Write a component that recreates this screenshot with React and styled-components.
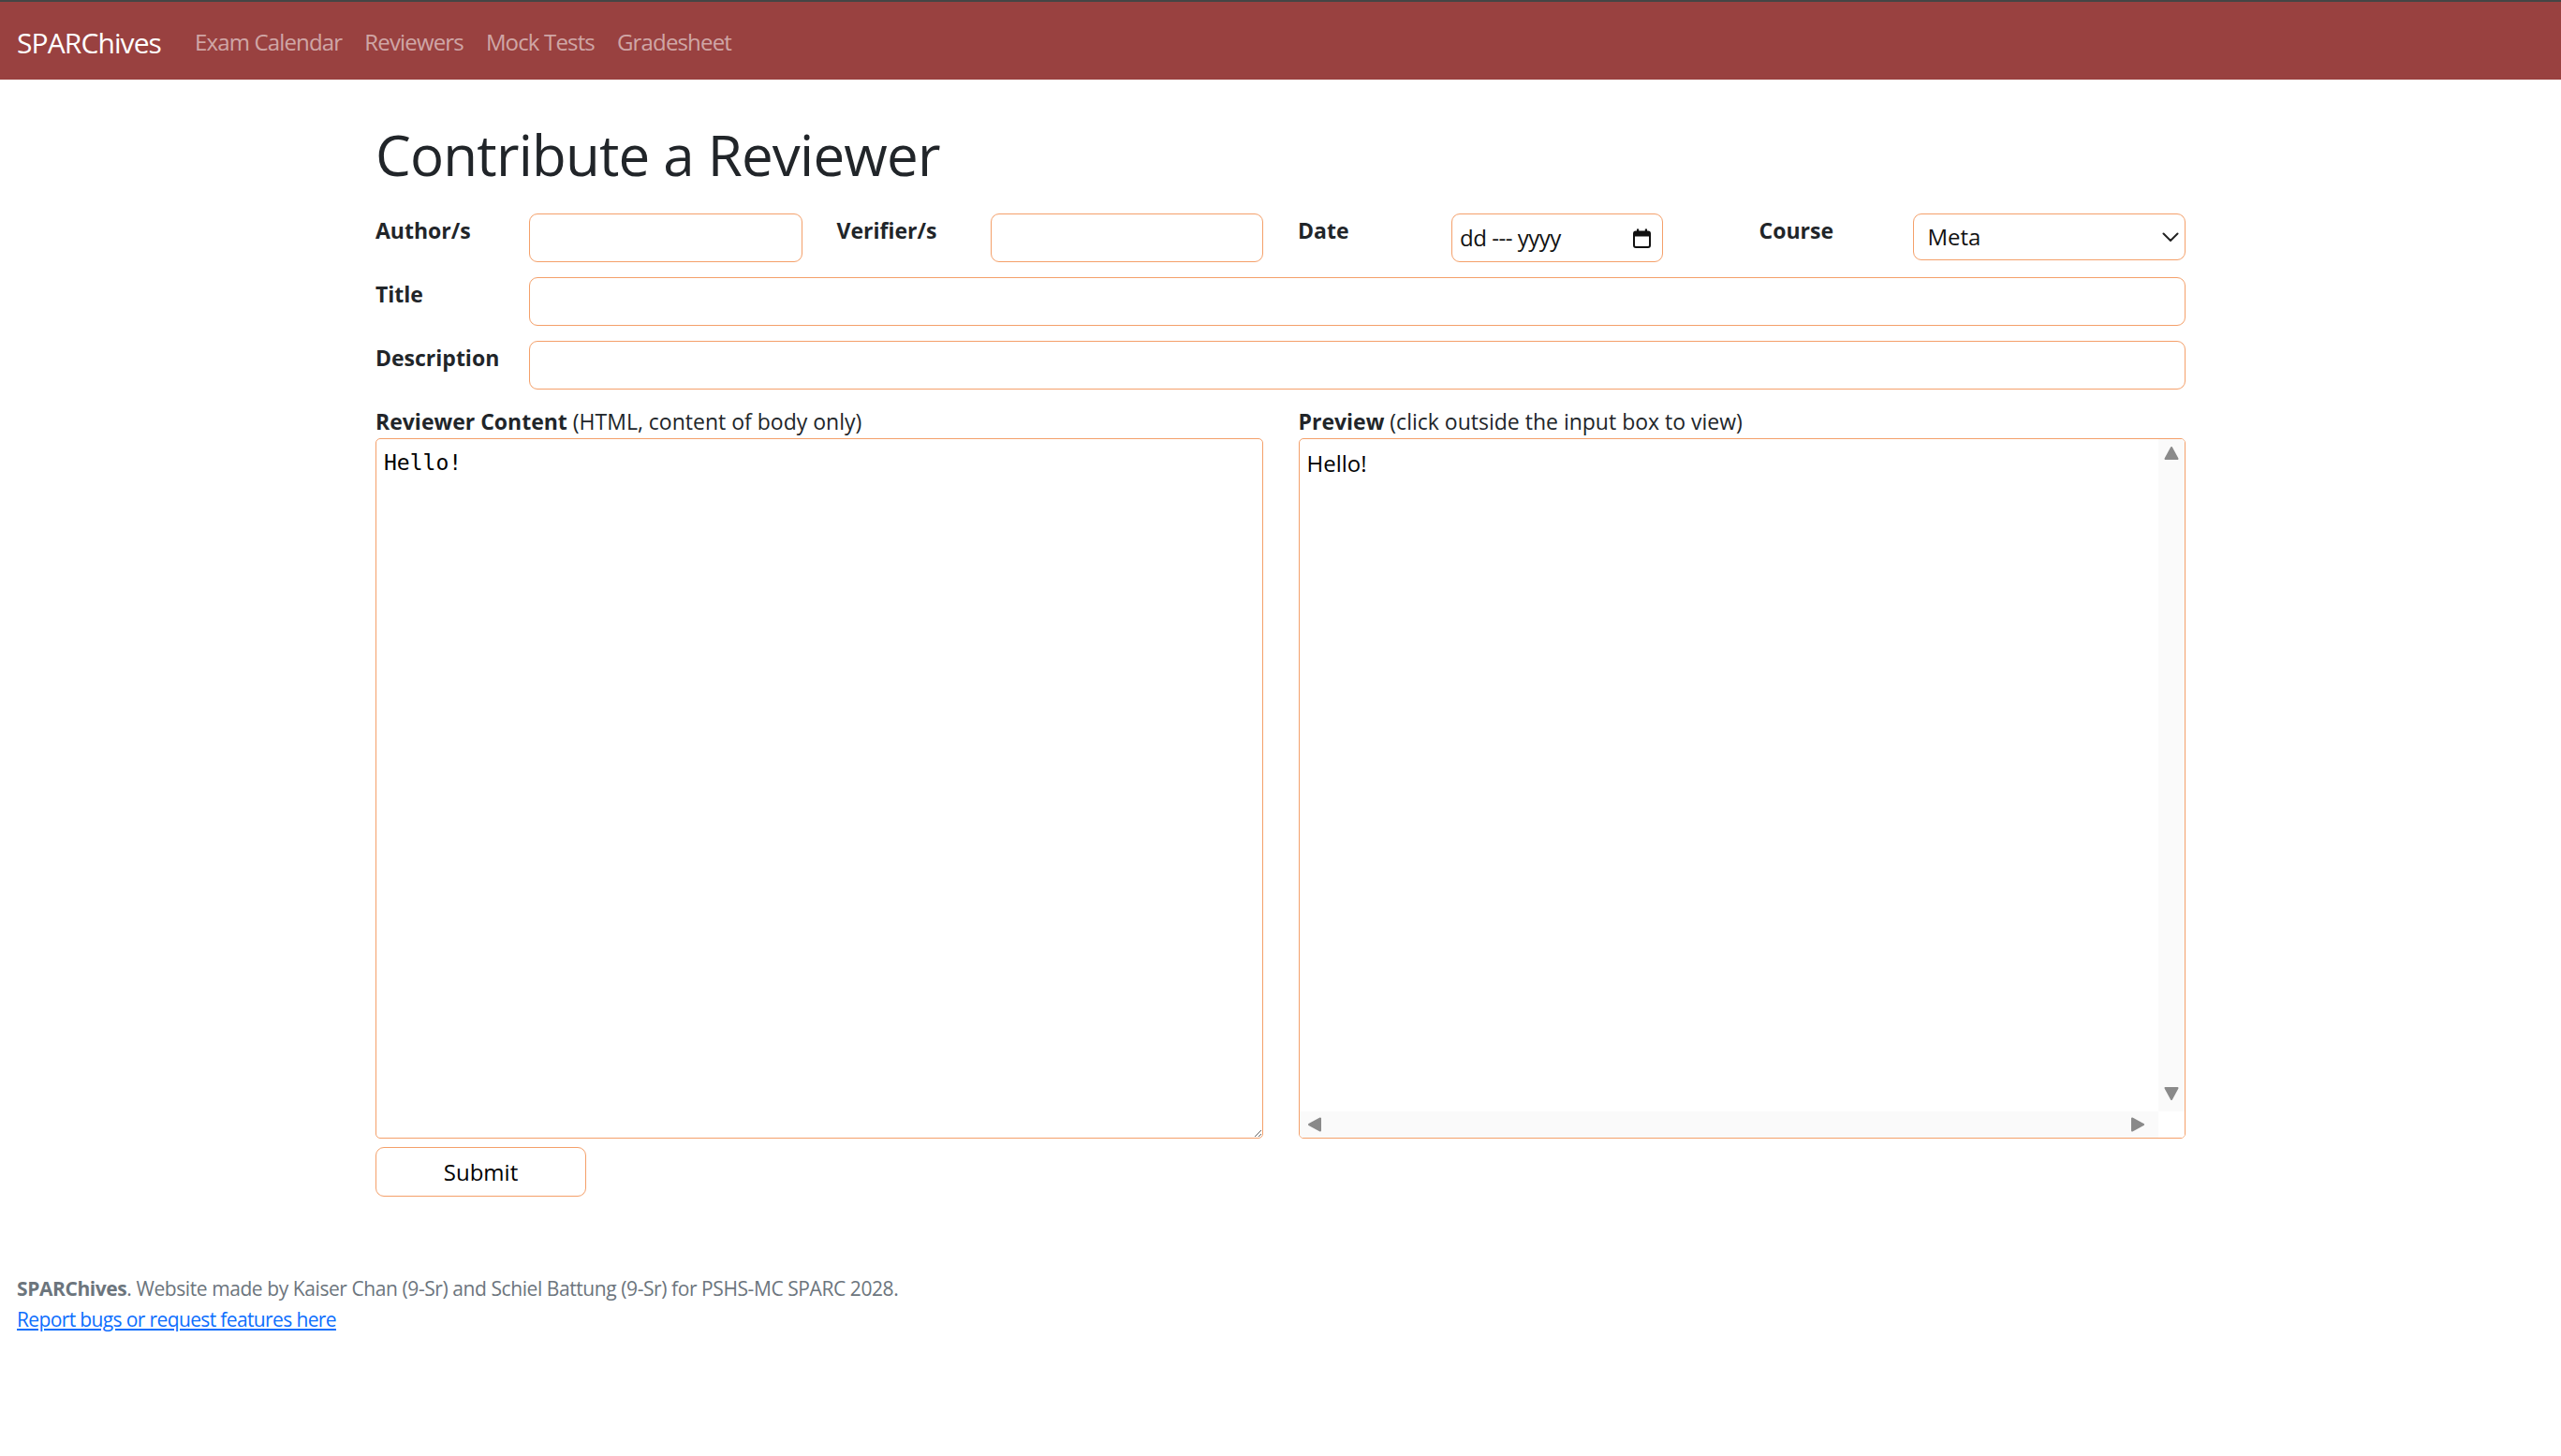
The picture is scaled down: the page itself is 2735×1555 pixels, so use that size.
import React from 'react'
import styled, { createGlobalStyle } from 'styled-components'

const GlobalStyle = createGlobalStyle`
    html, body {
        margin: 0;
        padding: 0;
        background: #fff;
    }
    body {
        font-family: "Open Sans", "Noto Sans", sans-serif;
        font-size: 24px;
        line-height: 1.5;
        color: #212529;
    }
    * {
        box-sizing: border-box;
    }
`

const App = () => {
  return (
    <>
      <GlobalStyle />
      <NavBar>
        <Brand>SPARChives</Brand>
        <NavLinks>
          <NavLink>Exam Calendar</NavLink>
          <NavLink>Reviewers</NavLink>
          <NavLink>Mock Tests</NavLink>
          <NavLink>Gradesheet</NavLink>
        </NavLinks>
      </NavBar>

      <Main>
        <Heading>Contribute a Reviewer</Heading>

        <FourCols>
          <Field>
            <Label>Author/s</Label>
            <Input />
          </Field>
          <Field>
            <Label>Verifier/s</Label>
            <Input />
          </Field>
          <Field>
            <Label>Date</Label>
            <DateBox>
              <span>dd --- yyyy</span>
              <CalendarIcon />
            </DateBox>
          </Field>
          <Field>
            <Label>Course</Label>
            <SelectBox>
              <span>Meta</span>
              <ChevronIcon />
            </SelectBox>
          </Field>
        </FourCols>

        <Field>
          <Label>Title</Label>
          <Input />
        </Field>
        <Field>
          <Label>Description</Label>
          <Input />
        </Field>

        <EditorGrid>
          <EditorCol>
            <EditorLabel><b>Reviewer Content</b> (HTML, content of body only)</EditorLabel>
            <CodeArea defaultValue="Hello!" spellCheck={false} />
          </EditorCol>
          <EditorCol>
            <EditorLabel><b>Preview</b> (click outside the input box to view)</EditorLabel>
            <PreviewFrame>
              <PreviewBody>Hello!</PreviewBody>
              <VTrack>
                <Arrow dir="up" />
                <Arrow dir="down" />
              </VTrack>
              <HTrack>
                <Arrow dir="left" />
                <Arrow dir="right" />
              </HTrack>
              <Corner />
            </PreviewFrame>
          </EditorCol>
        </EditorGrid>

        <SubmitButton>Submit</SubmitButton>
      </Main>

      <Footer>
        <FooterText><b>SPARChives</b>. Website made by Kaiser Chan (9-Sr) and Schiel Battung (9-Sr) for PSHS-MC SPARC 2028.</FooterText>
        <FooterLink href="#">Report bugs or request features here</FooterLink>
      </Footer>
    </>
  )
}

export default App

const CalendarIcon = () => (
  <svg width="19" height="21" viewBox="0 0 19 21">
    <rect x="1" y="3.5" width="17" height="16.5" rx="2" fill="none" stroke="#111" strokeWidth="2" />
    <rect x="1" y="3.5" width="17" height="5" fill="#111" />
    <rect x="4" y="0.5" width="2.2" height="4" fill="#111" />
    <rect x="12.8" y="0.5" width="2.2" height="4" fill="#111" />
  </svg>
)

const ChevronIcon = () => (
  <svg width="18" height="11" viewBox="0 0 18 11">
    <polyline points="1.5,1.5 9,9 16.5,1.5" fill="none" stroke="#222" strokeWidth="2" strokeLinecap="round" strokeLinejoin="round" />
  </svg>
)

// scrollbar arrows of the preview frame
const arrowPaths = {
  up: 'M8 2 L14.5 14 L1.5 14 Z',
  down: 'M1.5 2 L14.5 2 L8 14 Z',
  left: 'M2 8 L14 1.5 L14 14.5 Z',
  right: 'M2 1.5 L14 8 L2 14.5 Z',
}

const Arrow = ({ dir }) => (
  <svg width="16" height="16" viewBox="0 0 16 16">
    <path d={arrowPaths[dir]} fill="#8a8a8a" stroke="#8a8a8a" strokeWidth="2" strokeLinejoin="round" />
  </svg>
)

const NavBar = styled.nav`
    display: flex;
    flex-direction: row;
    align-items: center;
    height: 85px;
    padding: 3px 18px 0;
    background-color: #994140;
    border-top: 2px solid #454545;
`
const Brand = styled.div`
    font-size: 30px;
    color: #fff;
    margin-right: 24px;
    line-height: 1.5;
    letter-spacing: -0.03em;
`
const NavLinks = styled.div`
    display: flex;
    flex-direction: row;
    align-items: center;
`
const NavLink = styled.div`
    padding: 0 12px;
    font-size: 24px;
    color: rgba(255, 255, 255, 0.55);
    letter-spacing: -0.035em;
`
const Main = styled.main`
    width: 1933px;
    margin: 0 auto;
    padding-top: 44px;
    display: flex;
    flex-direction: column;
    gap: 16px;
`
const Heading = styled.h1`
    font-size: 60px;
    font-weight: 500;
    line-height: 1.2;
    margin: 0 0 11px 0;
    letter-spacing: -0.013em;
`
const FourCols = styled.div`
    display: grid;
    grid-template-columns: repeat(4, 1fr);
    column-gap: 37px;
`
const Field = styled.div`
    display: grid;
    grid-template-columns: 164px 1fr;
    align-items: start;
`
const Label = styled.label`
    font-weight: 700;
    font-size: 23px;
    line-height: 36px;
`
const Input = styled.input`
    height: 52px;
    width: 100%;
    border: 1px solid #f4a06a;
    border-radius: 9px;
    padding: 0 13px;
    font-family: inherit;
    font-size: 24px;
    outline: none;
`
const DateBox = styled.div`
    width: 226px;
    height: 52px;
    border: 1px solid #f4a06a;
    border-radius: 9px;
    padding: 0 12px 0 8px;
    display: flex;
    align-items: center;
    justify-content: space-between;
    font-size: 24px;
    color: #111;
    letter-spacing: -0.02em;
`
const SelectBox = styled.div`
    height: 50px;
    border: 1px solid #f4a06a;
    border-radius: 9px;
    padding: 0 6px 0 15px;
    display: flex;
    align-items: center;
    justify-content: space-between;
    font-size: 24px;
    color: #111;
`
const EditorGrid = styled.div`
    display: grid;
    grid-template-columns: 1fr 1fr;
    column-gap: 38px;
`
const EditorCol = styled.div`
    display: flex;
    flex-direction: column;
`
const EditorLabel = styled.div`
    font-size: 23px;
    line-height: 36px;
    b {
        font-weight: 700;
    }
`
const CodeArea = styled.textarea`
    height: 748px;
    width: 100%;
    border: 1px solid #f4a06a;
    border-radius: 5px;
    padding: 12px 8px;
    font-family: "DejaVu Sans Mono", "Liberation Mono", monospace;
    font-size: 23px;
    color: #000;
    outline: none;
    resize: vertical;
`
const PreviewFrame = styled.div`
    height: 748px;
    border: 1px solid #f4a06a;
    border-radius: 5px;
    overflow: hidden;
    display: grid;
    grid-template-columns: 1fr 28px;
    grid-template-rows: 1fr 28px;
`
const PreviewBody = styled.div`
    padding: 8px 8px;
    font-size: 24px;
    line-height: 1.5;
    color: #000;
`
const VTrack = styled.div`
    background: #fafafa;
    display: flex;
    flex-direction: column;
    justify-content: space-between;
    align-items: center;
    padding: 7px 0 11px;
`
const HTrack = styled.div`
    background: #fafafa;
    display: flex;
    flex-direction: row;
    justify-content: space-between;
    align-items: center;
    padding: 0 14px 0 8px;
`
const Corner = styled.div`
    background: #fff;
`
const SubmitButton = styled.button`
    width: 225px;
    height: 53px;
    margin-top: -7px;
    background: #fff;
    border: 1px solid #f4a06a;
    border-radius: 9px;
    font-family: inherit;
    font-size: 24px;
    color: #000;
`
const Footer = styled.footer`
    padding: 82px 18px 40px;
    display: flex;
    flex-direction: column;
    font-size: 21px;
    line-height: 33px;
    letter-spacing: -0.02em;
`
const FooterText = styled.div`
    color: #6c757d;
    b {
        font-weight: 700;
    }
`
const FooterLink = styled.a`
    color: #0d6efd;
    text-decoration: underline;
    align-self: flex-start;
    letter-spacing: -0.03em;
`
